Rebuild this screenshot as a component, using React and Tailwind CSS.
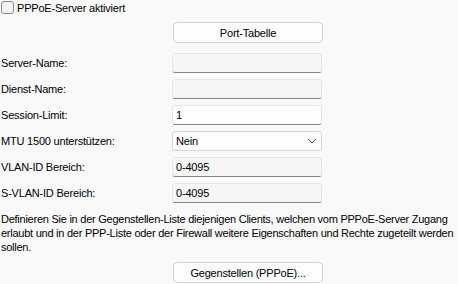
import React from 'react';

const Field = ({ label, children }) => (
  <div className="flex items-center h-5">
    <span className="w-[172px] shrink-0 pl-px">{label}</span>
    {children}
  </div>
);

const TextBox = ({ value, muted }) => (
  <div
    className={`w-[150px] h-5 rounded-[3px] border border-[#e5e5e5] border-b-[#868686] pl-[3px] flex items-center ${
      muted ? 'bg-[#f6f6f6]' : 'bg-[#fdfdfd]'
    }`}
  >
    {value}
  </div>
);

const Button = ({ children }) => (
  <div className="w-[150px] h-[21px] rounded-[4px] border border-[#d2d2d2] bg-[#fdfdfd] flex items-center justify-center">
    {children}
  </div>
);

export default function App() {
  return (
    <div
      className="w-[458px] h-[284px] bg-[#f9f9f9] text-[11px] leading-[14px] text-black overflow-hidden"
      style={{ fontFamily: '"Liberation Sans", Arial, sans-serif', letterSpacing: '-0.2px' }}
    >
      {/* checkbox */}
      <div className="flex items-center h-[14px] pt-px">
        <div className="w-[13px] h-[13px] ml-px rounded-[3px] border border-[#8a8a8a] bg-[#f3f3f3]"></div>
        <span className="ml-[3px]">PPPoE-Server aktiviert</span>
      </div>

      <div className="mt-[8px] pl-[173px]">
        <Button>Port-Tabelle</Button>
      </div>

      <div className="mt-[10px] flex flex-col gap-[6px]">
        <Field label="Server-Name:">
          <TextBox muted />
        </Field>
        <Field label="Dienst-Name:">
          <TextBox muted />
        </Field>
        <Field label="Session-Limit:">
          <TextBox value="1" />
        </Field>
        <Field label="MTU 1500 unterstützen:">
          <div className="w-[150px] h-5 rounded-[3px] border border-[#d6d6d6] bg-[#fdfdfd] pl-[3px] pr-[4px] flex items-center justify-between">
            <span>Nein</span>
            <svg width="10" height="6" viewBox="0 0 10 6" fill="none" stroke="#555" strokeWidth="1">
              <path d="M1 1l4 4 4-4" />
            </svg>
          </div>
        </Field>
        <Field label="VLAN-ID Bereich:">
          <TextBox value="0-4095" muted />
        </Field>
        <Field label="S-VLAN-ID Bereich:">
          <TextBox value="0-4095" muted />
        </Field>
      </div>

      <p className="mt-[9px] pl-px whitespace-nowrap tracking-[-0.25px]">
        Definieren Sie in der Gegenstellen-Liste diejenigen Clients, welchen vom PPPoE-Server Zugang
        <br />
        erlaubt und in der PPP-Liste oder der Firewall weitere Eigenschaften und Rechte zugeteilt werden
        <br />
        sollen.
      </p>

      <div className="mt-[8px] pl-[173px]">
        <Button>Gegenstellen (PPPoE)...</Button>
      </div>
    </div>
  );
}
